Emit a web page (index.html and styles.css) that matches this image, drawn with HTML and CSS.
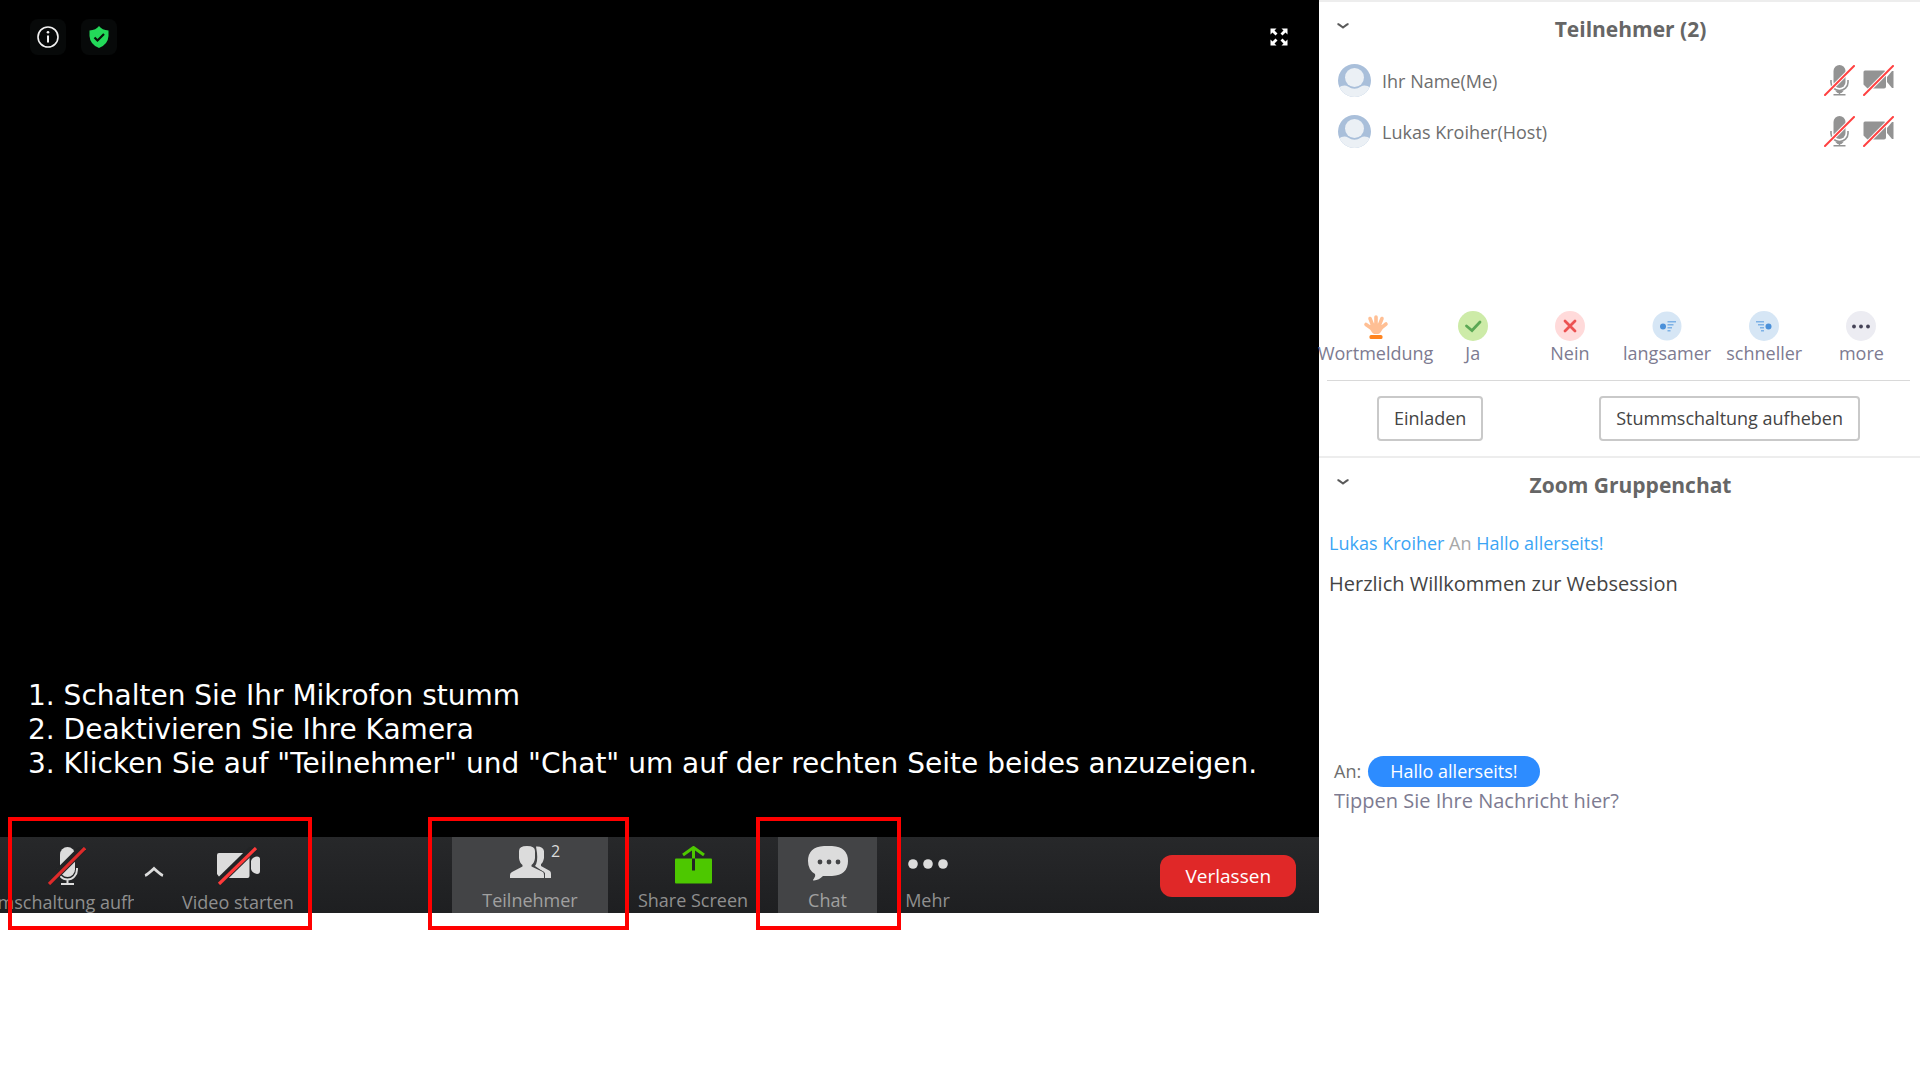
FILE: index.html
```html
<!DOCTYPE html>
<html lang="de">
<head>
    <meta charset="UTF-8">
    <meta name="viewport" content="width=device-width, initial-scale=1.0">
    <title>Zoom Websession</title>
    <link rel="stylesheet" href="styles.css">
</head>
<body>
    <!-- Shared icons -->
    <svg class="sprite" aria-hidden="true">
        <symbol id="avatar" viewBox="0 0 33 33">
            <clipPath id="avatarClip"><circle cx="16.5" cy="16.5" r="16.5"/></clipPath>
            <g clip-path="url(#avatarClip)">
                <rect width="33" height="33" fill="#a9bfda"/>
                <path d="M0 33V24Q6 20 10 22.5Q16.500 27 23 22.500Q27 20 33 24V33Z" fill="#ebf0f5"/>
                <circle cx="16.500" cy="13.500" r="10.500" fill="#a9bfda"/>
                <circle cx="16.500" cy="13.500" r="9.500" fill="#ebf0f5"/>
            </g>
        </symbol>
        <symbol id="micOff" viewBox="0 0 31 31">
            <rect x="9.500" y="0" width="12" height="23" rx="6" fill="#939393"/>
            <path d="M7 15v2.500a8.500 8 0 0 0 17 0V15M15.500 26v3" fill="none" stroke="#939393" stroke-width="1.600"/>
            <path d="M11.500 26h8l-2 2h-4zM9.500 29h12v1.500h-12z" fill="#939393"/>
            <path d="M1 30L30 1" stroke="#fff" stroke-width="4"/>
            <path d="M1 30L30 1" stroke="#ff4040" stroke-width="2" stroke-linecap="round"/>
        </symbol>
        <symbol id="camOff" viewBox="0 0 31 31">
            <path d="M2 5.500h19q2 0 2 2v14q0 2-2 2H4.500L.500 19.500V7q0-1.500 1.500-1.500zM24 12l5-6h1.500v17H29l-5-6z" fill="#939393"/>
            <path d="M1 30L30 1" stroke="#fff" stroke-width="4"/>
            <path d="M1 30L30 1" stroke="#ff4040" stroke-width="2" stroke-linecap="round"/>
        </symbol>
        <symbol id="chevron" viewBox="0 0 12 6">
            <path d="M.500 1Q2 1.200 6 4.500Q10 1.200 11.500 1" fill="none" stroke="#5a5a5a" stroke-width="2"/>
        </symbol>
    </svg>

    <div class="meeting">
        <main class="video">
            <section class="stage">
                <div class="stage-top">
                    <button class="stage-button" aria-label="Informationen">
                        <svg width="22" height="22" viewBox="0 0 22 22"><circle cx="11" cy="11" r="10" fill="none" stroke="#f2f2f2" stroke-width="1.600"/><path d="M11 9.500v7" stroke="#f2f2f2" stroke-width="2"/><circle cx="11" cy="6.200" r="1.300" fill="#f2f2f2"/></svg>
                    </button>
                    <button class="stage-button" aria-label="Verschlüsselung">
                        <svg width="20" height="22" viewBox="0 0 20 22"><path d="M10 0Q13 4 19.500 4.500V10Q19 18.500 10 22Q1 18.500.500 10V4.500Q7 4 10 0z" fill="#23d959"/><path d="M5.500 11.500l3 3 6.500-6.500" fill="none" stroke="#07140a" stroke-width="2.200"/></svg>
                    </button>
                    <button class="stage-button fullscreen" aria-label="Vollbild">
                        <svg width="18" height="18" viewBox="0 0 18 18"><path d="M.500.500h6l-2 2 3 3-2 2-3-3-2 2zM17.500.500v6l-2-2-3 3-2-2 3-3-2-2zM.500 17.500v-6l2 2 3-3 2 2-3 3 2 2zM17.500 17.500h-6l2-2-3-3 2-2 3 3 2-2z" fill="#fff"/></svg>
                    </button>
                </div>
                <div class="caption">
                    <p>1. Schalten Sie Ihr Mikrofon stumm</p>
                    <p>2. Deaktivieren Sie Ihre Kamera</p>
                    <p>3. Klicken Sie auf "Teilnehmer" und "Chat" um auf der rechten Seite beides anzuzeigen.</p>
                </div>
            </section>

            <nav class="toolbar">
                <div class="audio-video">
                    <button class="tool tool-mic">
                        <svg width="38" height="38" viewBox="0 0 38 38"><rect x="12" y="0" width="15" height="30" rx="7.500" fill="#dcdcdc"/><path d="M10 21v1.500a9.500 10 0 0 0 19 0V21M19.500 32v5" fill="none" stroke="#dcdcdc" stroke-width="2"/><path d="M13 36h13v2H13z" fill="#dcdcdc"/><path d="M0 36L36 0" stroke="#232426" stroke-width="8"/><path d="M1 37L37 1" stroke="#df2a2a" stroke-width="3.200"/></svg>
                        <span>Stummschaltung aufheben</span>
                    </button>
                    <button class="caret" aria-label="Audiooptionen">
                        <svg width="20" height="11" viewBox="0 0 20 11"><path d="M1 9.500Q3 9 10 2.500Q17 9 19 9.500" fill="none" stroke="#dcdcdc" stroke-width="2.800"/></svg>
                    </button>
                    <button class="tool tool-video">
                        <svg width="43" height="38" viewBox="0 0 43 38"><path d="M2 6h28.500q2 0 2 2v21q0 2-2 2H3L0 27V8q0-2 2-2zM34 14q1-4 6-4.500Q43 9.500 43 12v12q0 3-3 3-5-1-6-5z" fill="#dcdcdc"/><path d="M1 36L38 0" stroke="#232426" stroke-width="8"/><path d="M2 37L39 1" stroke="#ff3a3a" stroke-width="3.200"/></svg>
                        <span>Video starten</span>
                    </button>
                </div>

                <div class="panels">
                    <div class="highlight highlight-participants">
                        <button class="tool active tool-participants">
                            <svg width="41" height="38" viewBox="0 0 41 38"><path d="M26 .500Q33 0 34 5v7q-1 5-3 6v2l9 5q1 1 1 3v4h-6v-5l-10-7q3-4 2-13z" fill="#dcdcdc"/><path d="M17 0Q25 0 25 5v7q-.500 5-3.500 7v1.500L33 26q1 1 1 3v3H0v-3q0-2 2-3l10.500-5.500V19Q9.500 17 9 12V5Q9 0 17 0z" fill="#dcdcdc" stroke="#434446" stroke-width="1.500" paint-order="stroke"/></svg>
                            <span>Teilnehmer</span>
                            <b class="count">2</b>
                        </button>
                    </div>
                    <button class="tool tool-share">
                        <svg width="37" height="38" viewBox="0 0 37 38"><rect y="12.500" width="37" height="25" rx="1" fill="#4dc800"/><path d="M18.500 1v12M8 9l10.500-7.500L29 9" fill="none" stroke="#4dc800" stroke-width="3"/><path d="M18.500 12.500v12" stroke="#232426" stroke-width="3"/></svg>
                        <span>Share Screen</span>
                    </button>
                    <div class="highlight highlight-chat">
                        <button class="tool active tool-chat">
                            <svg width="40" height="38" viewBox="0 0 40 38"><path d="M16 0h8Q40 1 40 15T24 30h-9q-4 4-9 4.500-2 0 0-2 2-2 1-4.500Q0 24 0 15 0 1 16 0z" fill="#dcdcdc"/><g fill="#434446"><circle cx="12" cy="16" r="2.400"/><circle cx="21" cy="16" r="2.400"/><circle cx="30" cy="16" r="2.400"/></g></svg>
                            <span>Chat</span>
                        </button>
                    </div>
                    <button class="tool tool-more">
                        <svg width="40" height="38" viewBox="0 0 40 38"><g fill="#dcdcdc"><circle cx="5" cy="18" r="4.800"/><circle cx="20" cy="18" r="4.800"/><circle cx="35" cy="18" r="4.800"/></g></svg>
                        <span>Mehr</span>
                    </button>
                </div>

                <button class="leave">Verlassen</button>
            </nav>
        </main>

        <aside class="sidebar">
            <section class="panel participants">
                <header class="panel-header">
                    <button class="collapse" aria-label="Teilnehmer einklappen"><svg width="12" height="6"><use href="#chevron"/></svg></button>
                    <h2>Teilnehmer (2)</h2>
                </header>
                <ul class="people">
                    <li>
                        <svg width="33" height="33"><use href="#avatar"/></svg>
                        <span>Ihr Name(Me)</span>
                        <svg width="31" height="31"><use href="#micOff"/></svg>
                        <svg width="31" height="31"><use href="#camOff"/></svg>
                    </li>
                    <li>
                        <svg width="33" height="33"><use href="#avatar"/></svg>
                        <span>Lukas Kroiher(Host)</span>
                        <svg width="31" height="31"><use href="#micOff"/></svg>
                        <svg width="31" height="31"><use href="#camOff"/></svg>
                    </li>
                </ul>
                <div class="reactions">
                    <button>
                        <svg width="30" height="30" viewBox="0 0 30 30"><g stroke="#ffbf94" stroke-width="3.600" stroke-linecap="round"><path d="M10 17L5 13.500M12 15L9 7.500M15 14V6M18 15l3-7.500M20 17l5-4"/></g><path d="M8 14.500Q15 10 22.500 15 20 23 17 23h-4q-3-1-5-8.500z" fill="#ffbf94"/><rect x="8.500" y="24" width="13" height="4" rx="1.500" fill="#ff8420"/></svg>
                        Wortmeldung
                    </button>
                    <button>
                        <svg width="30" height="30" viewBox="0 0 30 30"><circle cx="15" cy="15" r="15" fill="#cdeba8"/><path d="M8.500 15l5.500 4.500 8-8.500" fill="none" stroke="#5aa854" stroke-width="2.800" stroke-linecap="round"/></svg>
                        Ja
                    </button>
                    <button>
                        <svg width="30" height="30" viewBox="0 0 30 30"><circle cx="15" cy="15" r="15" fill="#ffdada"/><path d="M10 10l10 10M20 10L10 20" stroke="#ec5252" stroke-width="2.800" stroke-linecap="round"/></svg>
                        Nein
                    </button>
                    <button>
                        <svg width="30" height="30" viewBox="0 0 30 30"><circle cx="15" cy="15" r="14.500" fill="#d6e6f5"/><circle cx="11" cy="15.500" r="3" fill="#4a90d9"/><path d="M15.500 10.700h8.500M15.500 13.700h6M15.500 16.700h4.500M15.500 19.700h3" stroke="#7db1e6" stroke-width="1.500"/></svg>
                        langsamer
                    </button>
                    <button>
                        <svg width="30" height="30" viewBox="0 0 30 30"><circle cx="15" cy="15" r="15" fill="#d6e6f5"/><circle cx="19.500" cy="15.500" r="3" fill="#4a90d9"/><path d="M15 10.700H7M15 13.700H9M15 16.700h-4M15 19.700h-3" stroke="#7db1e6" stroke-width="1.500"/></svg>
                        schneller
                    </button>
                    <button>
                        <svg width="30" height="30" viewBox="0 0 30 30"><circle cx="15" cy="15" r="15" fill="#ececf2"/><g fill="#454357"><circle cx="8" cy="15.500" r="1.900"/><circle cx="15" cy="15.500" r="1.900"/><circle cx="22" cy="15.500" r="1.900"/></g></svg>
                        more
                    </button>
                </div>
                <div class="actions">
                    <button>Einladen</button>
                    <button>Stummschaltung aufheben</button>
                </div>
            </section>

            <section class="panel chat">
                <header class="panel-header">
                    <button class="collapse" aria-label="Chat einklappen"><svg width="12" height="6"><use href="#chevron"/></svg></button>
                    <h2>Zoom Gruppenchat</h2>
                </header>
                <div class="messages">
                    <p class="meta"><span class="name">Lukas Kroiher</span> An <span class="name">Hallo allerseits!</span></p>
                    <p class="message">Herzlich Willkommen zur Websession</p>
                </div>
                <form class="compose">
                    <div class="to">
                        <span>An:</span>
                        <button type="button" class="recipient">Hallo allerseits!</button>
                    </div>
                    <textarea rows="1" placeholder="Tippen Sie Ihre Nachricht hier?" aria-label="Nachricht"></textarea>
                </form>
            </section>
        </aside>
    </div>
</body>
</html>
```
FILE: styles.css
```css
* {
    box-sizing: border-box;
}
body {
    margin: 0;
    min-height: 100vh;
    font-family: "Open Sans", sans-serif;
    font-size: 18px;
    background-color: #fff;
}
h2, p, ul {
    margin: 0;
    padding: 0;
}
svg {
    display: block;
    flex: none;
}
button {
    padding: 0;
    border: none;
    background: none;
    font: inherit;
    cursor: pointer;
}
.sprite {
    position: absolute;
    width: 0;
    height: 0;
}
.meeting {
    display: grid;
    grid-template-columns: minmax(0, 687fr) minmax(0, 313fr);
    min-height: 84.5vh;
}

/* Video area */
.video {
    display: flex;
    flex-direction: column;
}
.stage {
    flex: 1;
    display: flex;
    flex-direction: column;
    justify-content: space-between;
    padding: 19px 22px 56px 28px;
    background-color: #000;
}
.stage-top {
    display: flex;
    gap: 15px;
    padding-left: 2px;
}
.stage-button {
    display: flex;
    align-items: center;
    justify-content: center;
    width: 36px;
    height: 36px;
    border-radius: 8px;
    background-color: #070909;
}
.fullscreen {
    margin-left: auto;
    background: none;
}
.caption {
    font-family: "DejaVu Sans", sans-serif;
    font-size: 28px;
    line-height: 34px;
    color: #fff;
}

/* Bottom toolbar */
.toolbar {
    display: flex;
    align-items: flex-start;
    height: 76px;
    background: linear-gradient(#27282a, #1e1f21);
    color: #8f8f8f;
}
.tool {
    position: relative;
    display: flex;
    flex-direction: column;
    align-items: center;
    gap: 4px;
    height: 76px;
    padding-top: 9px;
    line-height: 24px;
    white-space: nowrap;
    color: inherit;
}
.active {
    background-color: #434446;
    color: #a0a0a0;
}
.audio-video {
    position: relative;
    display: flex;
    padding-top: 1px;
}
.audio-video .tool {
    gap: 5px;
    height: 75px;
}
.tool-mic {
    width: 134px;
    overflow: hidden;
}
.caret {
    display: flex;
    justify-content: center;
    width: 39px;
    padding-top: 28px;
}
.tool-video {
    width: 130px;
}
.panels {
    display: flex;
    margin-left: 149px;
}
.highlight {
    position: relative;
}
/* Red frames around the controls that the steps refer to */
.audio-video::after,
.highlight::after {
    content: "";
    position: absolute;
    top: -20px;
    bottom: -17px;
    border: 4px solid #f00;
    pointer-events: none;
}
.audio-video::after {
    left: 8px;
    right: -9px;
}
.highlight-participants::after {
    left: -24px;
    right: -21px;
}
.highlight-chat::after {
    left: -22px;
    right: -24px;
}
.tool-participants {
    width: 156px;
}
.count {
    position: absolute;
    top: 2px;
    left: 99px;
    font-size: 16px;
    font-weight: 400;
    color: #dcdcdc;
}
.tool-share {
    width: 170px;
}
.tool-chat {
    width: 99px;
}
.tool-more {
    width: 101px;
}
.leave {
    margin: 18px 23px 0 auto;
    padding: 0 25px;
    border-radius: 12px;
    font-size: 19px;
    line-height: 42px;
    color: #fff;
    background-color: #e02828;
}

/* Sidebar */
.sidebar {
    display: flex;
    flex-direction: column;
    color: #6e6e6e;
}
.panel {
    display: flex;
    flex-direction: column;
    border-top: 2px solid #ededed;
}
.panel-header {
    display: flex;
    align-items: center;
    height: 53px;
    padding: 0 8px 0 18px;
}
.collapse {
    padding-bottom: 6px;
}
h2 {
    flex: 1;
    text-align: center;
    font-size: 21px;
    color: #666;
}
.people {
    height: 256px;
    list-style: none;
}
.people li {
    display: flex;
    align-items: center;
    height: 51px;
    padding: 0 26px 0 19px;
}
.people span {
    flex: 1;
    padding-left: 11px;
}
.people svg + svg {
    margin-left: 8px;
}
.reactions {
    display: grid;
    grid-template-columns: repeat(6, minmax(0, 1fr));
    margin: 0 10px 0 8px;
    padding-bottom: 15px;
    border-bottom: 1px solid #d9d9d9;
}
.reactions button {
    display: flex;
    flex-direction: column;
    align-items: center;
    line-height: 24px;
    color: #7d7b91;
}
.actions {
    display: flex;
    justify-content: space-between;
    padding: 15px 60px 15px 58px;
}
.actions button {
    padding: 0 15px;
    border: 2px solid #c9c9c9;
    border-radius: 4px;
    line-height: 41px;
    color: #444;
}
.chat {
    flex: 1;
}
.messages {
    flex: 1;
    padding: 19px 10px;
}
.meta {
    line-height: 26px;
    color: #a8a8a8;
}
.name {
    color: #3ba5f5;
}
.message {
    padding-top: 14px;
    font-size: 20px;
    line-height: 28px;
    color: #444;
}
.compose {
    padding: 0 15px 96px;
}
.to {
    display: flex;
    align-items: center;
    gap: 7px;
}
.recipient {
    padding: 0 22px;
    border-radius: 16px;
    line-height: 31px;
    color: #fff;
    background-color: #2d8cff;
}
textarea {
    display: block;
    width: 100%;
    height: 30px;
    padding: 0;
    border: none;
    outline: none;
    resize: none;
    font: inherit;
    font-size: 20px;
    line-height: 28px;
    color: #444;
}
textarea::placeholder {
    color: #7d7b91;
}
```
